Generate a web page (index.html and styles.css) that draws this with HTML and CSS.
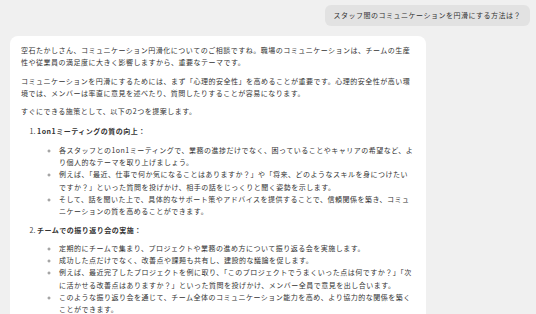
FILE: index.html
```html
<!DOCTYPE html>
<html lang="ja">
<head>
<meta charset="utf-8">
<link rel="stylesheet" href="styles.css">
</head>
<body>
<div class="chat">
  <div class="user">スタッフ間のコミュニケーションを円滑にする方法は？</div>
  <div class="bot">
    <p>空石たかしさん、コミュニケーション円滑化についてのご相談ですね。職場のコミュニケーションは、チームの生産性や従業員の満足度に大きく影響しますから、重要なテーマです。</p>
    <p>コミュニケーションを円滑にするためには、まず「心理的安全性」を高めることが重要です。心理的安全性が高い環境では、メンバーは率直に意見を述べたり、質問したりすることが容易になります。</p>
    <p>すぐにできる施策として、以下の2つを提案します。</p>
    <ol class="steps">
      <li><strong>1on1ミーティングの質の向上：</strong>
        <ul class="points">
          <li>各スタッフとの1on1ミーティングで、業務の進捗だけでなく、困っていることやキャリアの希望など、より個人的なテーマを取り上げましょう。</li>
          <li>例えば、「最近、仕事で何か気になることはありますか？」や「将来、どのようなスキルを身につけたいですか？」といった質問を投げかけ、相手の話をじっくりと聞く姿勢を示します。</li>
          <li>そして、話を聞いた上で、具体的なサポート策やアドバイスを提供することで、信頼関係を築き、コミュニケーションの質を高めることができます。</li>
        </ul>
      </li>
      <li><strong>チームでの振り返り会の実施：</strong>
        <ul class="points">
          <li>定期的にチームで集まり、プロジェクトや業務の進め方について振り返る会を実施します。</li>
          <li>成功した点だけでなく、改善点や課題も共有し、建設的な議論を促します。</li>
          <li>例えば、最近完了したプロジェクトを例に取り、「このプロジェクトでうまくいった点は何ですか？」「次に活かせる改善点はありますか？」といった質問を投げかけ、メンバー全員で意見を出し合います。</li>
          <li>このような振り返り会を通じて、チーム全体のコミュニケーション能力を高め、より協力的な関係を築くことができます。</li>
        </ul>
      </li>
    </ol>
  </div>
</div>
</body>
</html>
```

FILE: styles.css
```css
* { box-sizing: border-box; }
html, body {
  margin: 0;
  padding: 0;
  background: #f0f0f0;
  font-family: "Noto Sans CJK JP", "Noto Sans", sans-serif;
  color: #333;
}
.chat {
  display: flex;
  flex-direction: column;
  padding: 5px 6px 0 10px;
}
.user {
  align-self: flex-end;
  background: #e2e2e2;
  border-radius: 6px;
  padding: 4px 9px;
  font-size: 7px;
  letter-spacing: 0.5px;
  line-height: 13px;
  color: #333;
}
.bot {
  margin-top: 10px;
  width: 416px;
  background: #fff;
  border-radius: 8px;
  padding: 8px 11px 12px 11px;
  font-size: 7px;
  letter-spacing: 0.5px;
  line-height: 12.3px;
}
.bot p {
  margin: 0 0 6px;
}
.steps {
  margin: 8px 0 0;
  padding-left: 16px;
}
.steps > li {
  margin-bottom: 6px;
}
.steps > li::marker {
  content: counter(list-item) ". ";
  letter-spacing: 0;
  color: #444;
}
.steps strong {
  font-weight: 700;
}
.points {
  margin: 6px 0 0;
  padding-left: 22px;
  list-style: circle;
}
.points > li::marker {
  font-size: 5px;
  color: #888;
}
```
